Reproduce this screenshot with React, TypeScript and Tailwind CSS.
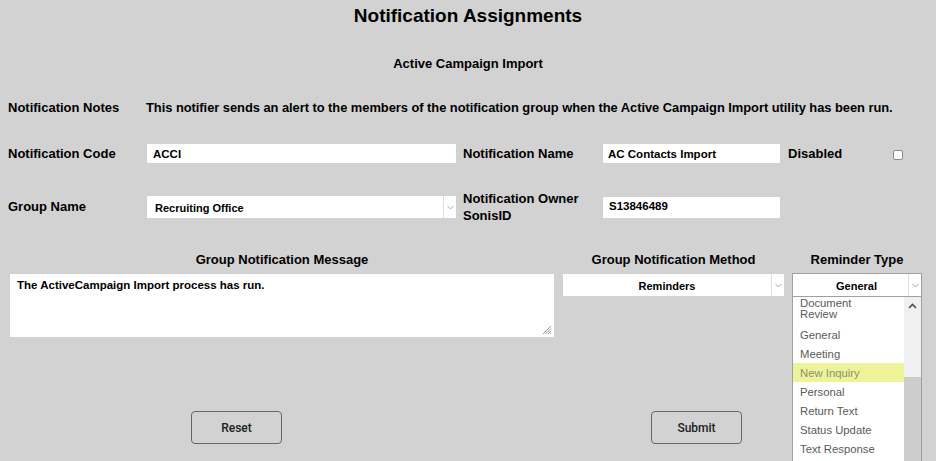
import React from "react";

function Chevron() {
  return (
    <svg width="7" height="5" viewBox="0 0 7 5" className="block">
      <path d="M0.5 1l3 3 3-3" fill="none" stroke="#a8a8a8" strokeWidth="1" />
    </svg>
  );
}

function SelectBox({ value, className, textClass }: { value: string; className: string; textClass: string }) {
  return (
    <div className={`flex bg-white ${className}`}>
      <div className={`flex-1 flex items-center text-[11px] font-bold text-black ${textClass}`}>{value}</div>
      <div className="w-[13px] border-l border-[#dedede] flex items-center justify-center">
        <Chevron />
      </div>
    </div>
  );
}

const reminderItems = ["General", "Meeting", "New Inquiry", "Personal", "Return Text", "Status Update", "Text Response"];

export default function App() {
  return (
    <div className="w-[936px] h-[461px] overflow-hidden bg-[#d2d2d2] text-black font-['Liberation_Sans',Arial,sans-serif]">
      <h1 className="pt-[4px] text-center text-[19px] leading-[24px] font-bold">Notification Assignments</h1>
      <h2 className="mt-[28px] text-center text-[13px] leading-[16px] font-bold">Active Campaign Import</h2>

      {/* Notes */}
      <div className="mt-[28px] flex px-[8px] text-[13px] leading-[16px] font-bold">
        <div className="w-[138px]">Notification Notes</div>
        <div className="whitespace-nowrap text-[12.9px] tracking-[-0.04px]">
          This notifier sends an alert to the members of the notification group when the Active Campaign Import utility has been run.
        </div>
      </div>

      {/* Code / Name */}
      <div className="mt-[28px] flex items-center pl-[8px] text-[13px] leading-[16px] font-bold">
        <div className="w-[139px]">Notification Code</div>
        <div className="w-[309px] h-[19px] bg-white pl-[6px] flex items-center text-[11.5px]">ACCI</div>
        <div className="w-[140px] ml-[7px]">Notification Name</div>
        <div className="w-[177px] h-[19px] bg-white pl-[5px] flex items-center text-[11.5px]">AC Contacts Import</div>
        <div className="ml-[8px] w-[105px]">Disabled</div>
        <div className="w-[10px] h-[10px] mt-[3px] bg-white border border-[#8a8a96] rounded-[2px]" />
      </div>

      {/* Group / Owner */}
      <div className="mt-[27px] flex items-center pl-[8px] text-[13px] font-bold">
        <div className="w-[139px] leading-[16px]">Group Name</div>
        <SelectBox value="Recruiting Office" className="w-[309px] h-[22px]" textClass="pl-[8px] pt-[2px]" />
        <div className="w-[140px] ml-[7px] leading-[17px]">
          Notification Owner
          <br />
          SonisID
        </div>
        <div className="w-[177px] h-[21px] bg-white pl-[6px] flex items-center text-[11.5px]">S13846489</div>
      </div>

      {/* Bottom section */}
      <div className="mt-[28px] flex pl-[10px] text-[13px] leading-[16px] font-bold">
        <div className="w-[544px]">
          <div className="text-center">Group Notification Message</div>
          <div className="relative mt-[6px] h-[63px] bg-white">
            <div className="pl-[7px] pt-[4px] text-[11.5px] leading-[14px]">The ActiveCampaign Import process has run.</div>
            <svg width="10" height="10" viewBox="0 0 10 10" className="absolute right-[2px] bottom-[2px]">
              <path d="M9 1L1 9M9 3.5L3.5 9M9 6L6 9M9 8.2L8.2 9" stroke="#8a8a8a" strokeWidth="0.9" />
            </svg>
          </div>
        </div>

        <div className="w-[221px] ml-[9px]">
          <div className="text-center">Group Notification Method</div>
          <SelectBox value="Reminders" className="mt-[6px] h-[22px]" textClass="justify-center pt-[2px]" />
        </div>

        <div className="w-[130px] ml-[8px]">
          <div className="text-center">Reminder Type</div>
          <div className="relative mt-[5px]">
            <SelectBox value="General" className="h-[24px] border border-[#a0a0a0]" textClass="justify-center pl-[12px] pt-[2px]" />
            {/* open dropdown list */}
            <div className="absolute left-0 top-[24px] w-[130px] h-[175px] flex bg-white border-x border-[#a0a0a0] font-normal">
              <div className="flex-1 text-[11.3px] text-[#5a5a5a]">
                <div className="pl-[7px] pt-[1px] pb-[5px] leading-[11px]">
                  Document
                  <br />
                  Review
                </div>
                {reminderItems.map((item) => (
                  <div
                    key={item}
                    className={
                      item === "New Inquiry"
                        ? "h-[19px] leading-[20px] pl-[7px] bg-[#eef39a] text-[#8f8f6e]"
                        : "h-[19px] leading-[20px] pl-[7px]"
                    }
                  >
                    {item}
                  </div>
                ))}
              </div>
              <div className="w-[17px] flex flex-col">
                <div className="h-[17px] bg-[#f0f0f0] flex items-center justify-center">
                  <svg width="9" height="6" viewBox="0 0 9 6" className="block">
                    <path d="M1 5l3.5-3.5L8 5" fill="none" stroke="#505050" strokeWidth="1.6" />
                  </svg>
                </div>
                <div className="h-[63px] bg-[#f0f0f0]" />
                <div className="flex-1 bg-[#cdcdcd]" />
              </div>
            </div>
          </div>
        </div>
      </div>

      {/* Buttons */}
      <div className="mt-[74px] flex pl-[191px] font-['Roboto',Arial,sans-serif]">
        <button className="w-[91px] h-[33px] border border-[#666] rounded-[4px] text-[12px] font-medium text-[#222]">Reset</button>
        <button className="ml-[369px] w-[91px] h-[33px] border border-[#666] rounded-[4px] text-[12px] font-medium text-[#222]">Submit</button>
      </div>
    </div>
  );
}
